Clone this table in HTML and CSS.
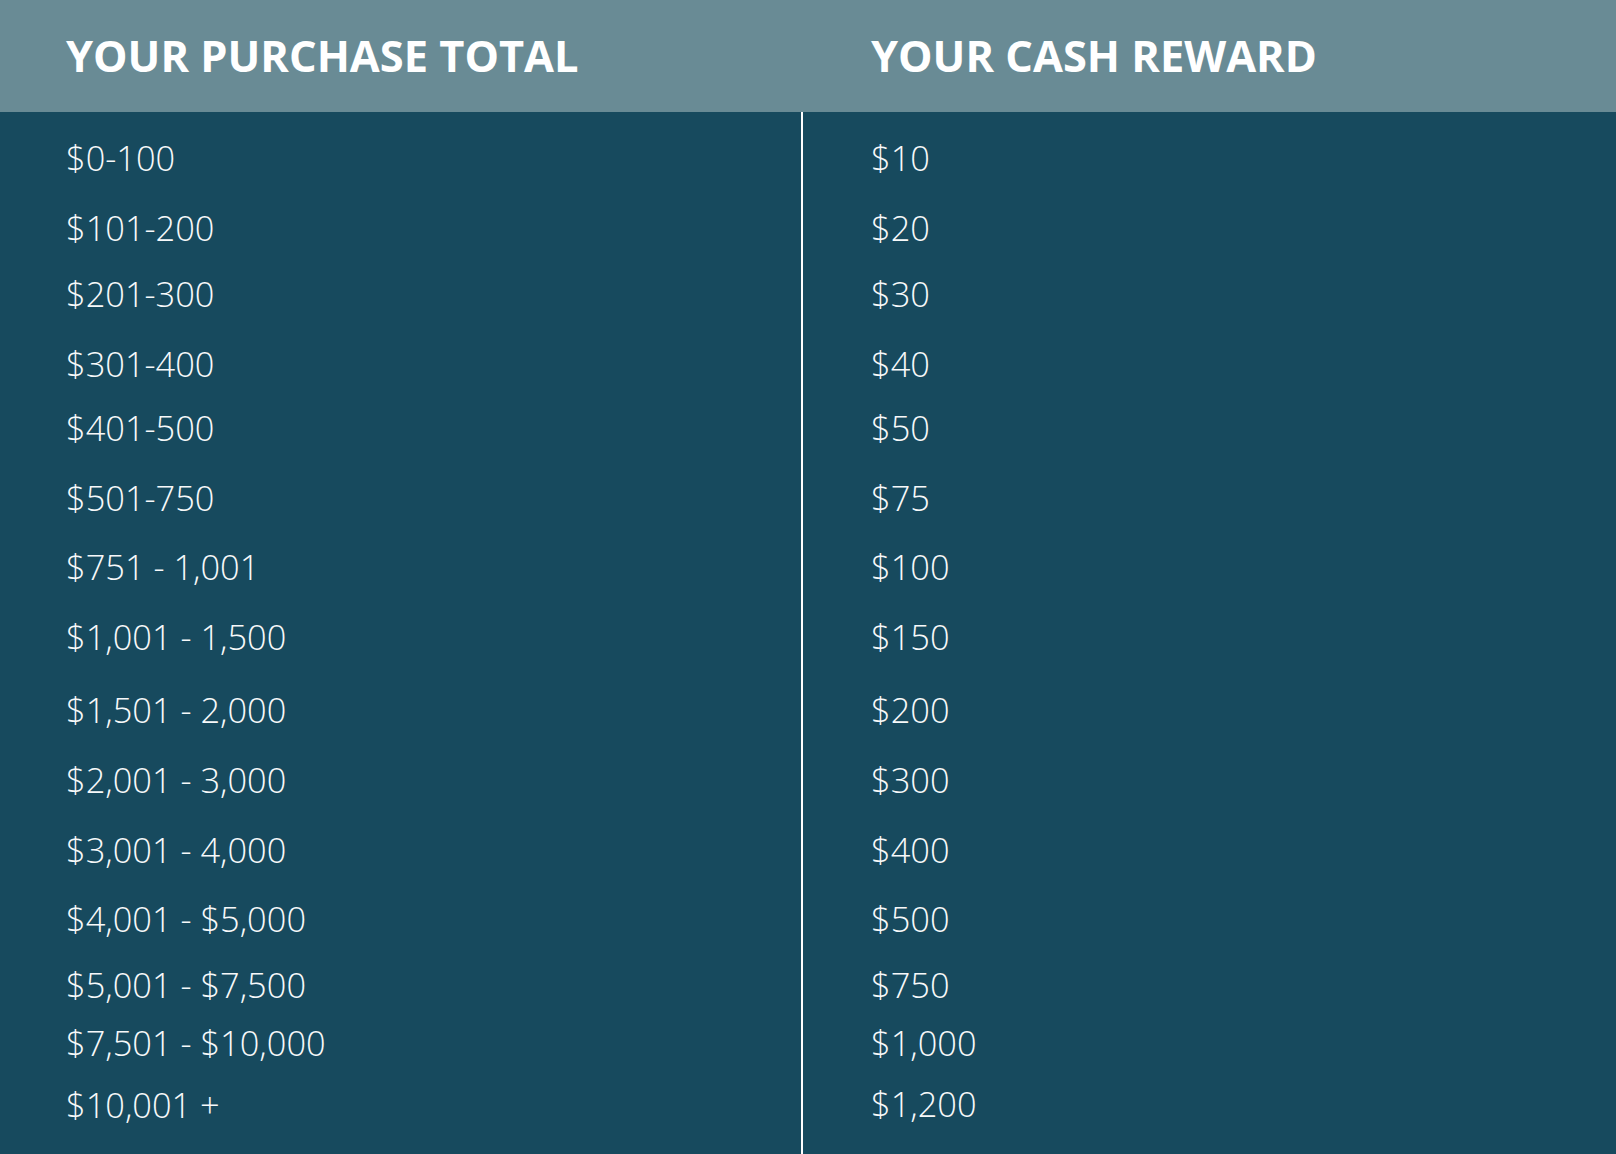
FILE: index.html
```html
<!DOCTYPE html>
<html lang="en">
<head>
<meta charset="utf-8">
<title>Cash Reward Table</title>
<link rel="stylesheet" href="styles.css">
</head>
<body>
<div class="table">
  <div class="head">
    <div class="hcell hcell-left">YOUR PURCHASE TOTAL</div>
    <div class="hcell hcell-right">YOUR CASH REWARD</div>
  </div>
  <div class="body">
    <div class="col col-left">
      <div class="cell">$0-100</div>
      <div class="cell">$101-200</div>
      <div class="cell">$201-300</div>
      <div class="cell">$301-400</div>
      <div class="cell">$401-500</div>
      <div class="cell">$501-750</div>
      <div class="cell">$751 - 1,001</div>
      <div class="cell">$1,001 - 1,500</div>
      <div class="cell">$1,501 - 2,000</div>
      <div class="cell">$2,001 - 3,000</div>
      <div class="cell">$3,001 - 4,000</div>
      <div class="cell">$4,001 - $5,000</div>
      <div class="cell">$5,001 - $7,500</div>
      <div class="cell">$7,501 - $10,000</div>
      <div class="cell">$10,001 +</div>
    </div>
    <div class="col col-right">
      <div class="cell">$10</div>
      <div class="cell">$20</div>
      <div class="cell">$30</div>
      <div class="cell">$40</div>
      <div class="cell">$50</div>
      <div class="cell">$75</div>
      <div class="cell">$100</div>
      <div class="cell">$150</div>
      <div class="cell">$200</div>
      <div class="cell">$300</div>
      <div class="cell">$400</div>
      <div class="cell">$500</div>
      <div class="cell">$750</div>
      <div class="cell">$1,000</div>
      <div class="cell">$1,200</div>
    </div>
  </div>
</div>
</body>
</html>
```
FILE: styles.css
```css
html, body {
  margin: 0;
  padding: 0;
  height: 100%;
}
body {
  font-family: "Open Sans", "Noto Sans", sans-serif;
  background: #174a5e;
  color: #ffffff;
  overflow: hidden;
}
.table {
  display: flex;
  flex-direction: column;
  width: 1616px;
  height: 1154px;
}
.head {
  display: flex;
  height: 112px;
  background: #698b95;
  align-items: center;
  flex-shrink: 0;
}
.hcell {
  font-weight: 700;
  font-size: 43.4px;
  line-height: 60px;
  white-space: nowrap;
}
.hcell-left {
  width: 801px;
  padding-left: 66px;
  box-sizing: border-box;
}
.hcell-right {
  padding-left: 70px;
}
.body {
  display: flex;
  flex: 1;
  background: #174a5e;
}
.col {
  display: flex;
  flex-direction: column;
  padding-top: 23px;
  box-sizing: border-box;
}
.col-left {
  width: 801px;
  padding-left: 66px;
}
.col-right {
  flex: 1;
  border-left: 2px solid #ffffff;
  padding-left: 68px;
}
.cell {
  font-size: 34.4px;
  font-weight: 350;
  line-height: 45px;
  height: 70px;
  white-space: nowrap;
  color: #f7f9fa;
}
.cell:nth-child(2) { height: 66px; }
.cell:nth-child(4) { height: 64px; }
.cell:nth-child(6) { height: 69px; }
.cell:nth-child(8) { height: 73px; }
.cell:nth-child(11) { height: 69px; }
.cell:nth-child(12) { height: 66px; }
.cell:nth-child(13) { height: 58px; }
.cell:nth-child(14) { height: 62px; }
.cell:nth-child(15) { height: 45px; }
.col-right .cell:nth-child(14) { height: 61px; }
```
